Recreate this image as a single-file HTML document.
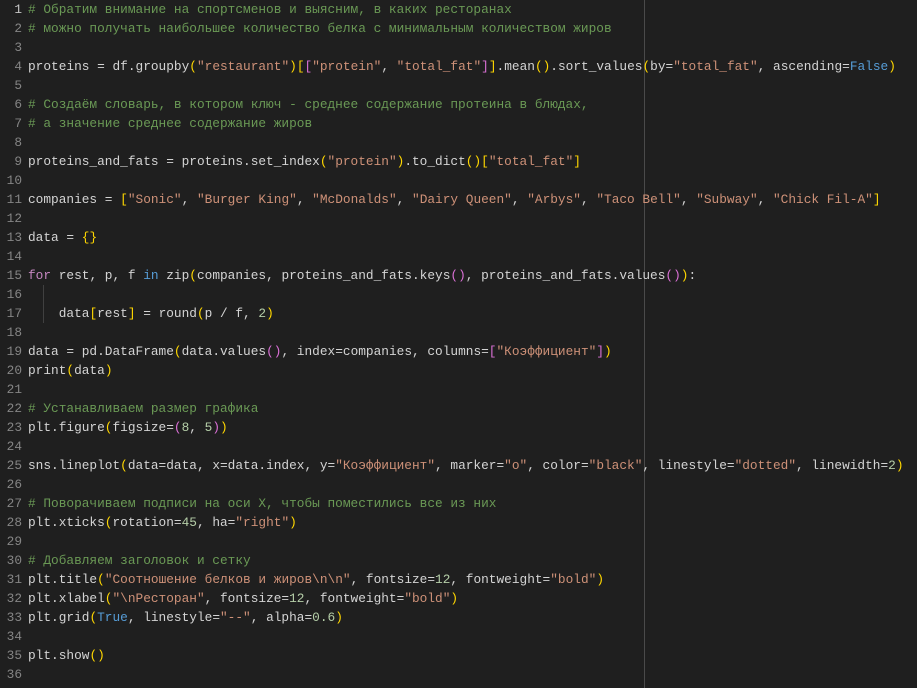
<!DOCTYPE html>
<html><head><meta charset="utf-8"><style>
html,body{margin:0;padding:0;background:#1f1f1f;width:917px;height:688px;overflow:hidden}
.ed{position:relative;font-family:"Liberation Mono","DejaVu Sans Mono",monospace;font-size:12.8px;color:#d4d4d4}
.l{position:absolute;left:0;height:19px;line-height:19px;white-space:pre}
.n{position:absolute;width:22px;text-align:right;color:#858585}
.c{position:absolute;left:28px}
.cm{color:#6a9955}.s{color:#ce9178}.k{color:#569cd6}.kf{color:#c586c0}.nu{color:#b5cea8}
.g{color:#ffd700}.p{color:#da70d6}.b{color:#179fff}
.ruler{position:absolute;left:644px;top:0;width:1px;height:688px;background:#4a4a4a}
.guide{position:absolute;left:43px;width:1px;background:#404040}
</style></head><body><div class="ed">
<div class="ruler"></div>
<div class="guide" style="top:285px;height:38px"></div>
<div class="l" style="top:0"><span class="n" style="color:#c6c6c6">1</span><span class="c"><span class="cm"># Обратим внимание на спортсменов и выясним, в каких ресторанах</span></span></div>
<div class="l" style="top:19px"><span class="n">2</span><span class="c"><span class="cm"># можно получать наибольшее количество белка с минимальным количеством жиров</span></span></div>
<div class="l" style="top:38px"><span class="n">3</span></div>
<div class="l" style="top:57px"><span class="n">4</span><span class="c">proteins = df.groupby<span class="g">(</span><span class="s">"restaurant"</span><span class="g">)</span><span class="g">[</span><span class="p">[</span><span class="s">"protein"</span>, <span class="s">"total_fat"</span><span class="p">]</span><span class="g">]</span>.mean<span class="g">()</span>.sort_values<span class="g">(</span>by=<span class="s">"total_fat"</span>, ascending=<span class="k">False</span><span class="g">)</span></span></div>
<div class="l" style="top:76px"><span class="n">5</span></div>
<div class="l" style="top:95px"><span class="n">6</span><span class="c"><span class="cm"># Создаём словарь, в котором ключ - среднее содержание протеина в блюдах,</span></span></div>
<div class="l" style="top:114px"><span class="n">7</span><span class="c"><span class="cm"># а значение среднее содержание жиров</span></span></div>
<div class="l" style="top:133px"><span class="n">8</span></div>
<div class="l" style="top:152px"><span class="n">9</span><span class="c">proteins_and_fats = proteins.set_index<span class="g">(</span><span class="s">"protein"</span><span class="g">)</span>.to_dict<span class="g">()</span><span class="g">[</span><span class="s">"total_fat"</span><span class="g">]</span></span></div>
<div class="l" style="top:171px"><span class="n">10</span></div>
<div class="l" style="top:190px"><span class="n">11</span><span class="c">companies = <span class="g">[</span><span class="s">"Sonic"</span>, <span class="s">"Burger King"</span>, <span class="s">"McDonalds"</span>, <span class="s">"Dairy Queen"</span>, <span class="s">"Arbys"</span>, <span class="s">"Taco Bell"</span>, <span class="s">"Subway"</span>, <span class="s">"Chick Fil-A"</span><span class="g">]</span></span></div>
<div class="l" style="top:209px"><span class="n">12</span></div>
<div class="l" style="top:228px"><span class="n">13</span><span class="c">data = <span class="g">{}</span></span></div>
<div class="l" style="top:247px"><span class="n">14</span></div>
<div class="l" style="top:266px"><span class="n">15</span><span class="c"><span class="kf">for</span> rest, p, f <span class="k">in</span> zip<span class="g">(</span>companies, proteins_and_fats.keys<span class="p">()</span>, proteins_and_fats.values<span class="p">()</span><span class="g">)</span>:</span></div>
<div class="l" style="top:285px"><span class="n">16</span></div>
<div class="l" style="top:304px"><span class="n">17</span><span class="c">    data<span class="g">[</span>rest<span class="g">]</span> = round<span class="g">(</span>p / f, <span class="nu">2</span><span class="g">)</span></span></div>
<div class="l" style="top:323px"><span class="n">18</span></div>
<div class="l" style="top:342px"><span class="n">19</span><span class="c">data = pd.DataFrame<span class="g">(</span>data.values<span class="p">()</span>, index=companies, columns=<span class="p">[</span><span class="s">"Коэффициент"</span><span class="p">]</span><span class="g">)</span></span></div>
<div class="l" style="top:361px"><span class="n">20</span><span class="c">print<span class="g">(</span>data<span class="g">)</span></span></div>
<div class="l" style="top:380px"><span class="n">21</span></div>
<div class="l" style="top:399px"><span class="n">22</span><span class="c"><span class="cm"># Устанавливаем размер графика</span></span></div>
<div class="l" style="top:418px"><span class="n">23</span><span class="c">plt.figure<span class="g">(</span>figsize=<span class="p">(</span><span class="nu">8</span>, <span class="nu">5</span><span class="p">)</span><span class="g">)</span></span></div>
<div class="l" style="top:437px"><span class="n">24</span></div>
<div class="l" style="top:456px"><span class="n">25</span><span class="c">sns.lineplot<span class="g">(</span>data=data, x=data.index, y=<span class="s">"Коэффициент"</span>, marker=<span class="s">"o"</span>, color=<span class="s">"black"</span>, linestyle=<span class="s">"dotted"</span>, linewidth=<span class="nu">2</span><span class="g">)</span></span></div>
<div class="l" style="top:475px"><span class="n">26</span></div>
<div class="l" style="top:494px"><span class="n">27</span><span class="c"><span class="cm"># Поворачиваем подписи на оси X, чтобы поместились все из них</span></span></div>
<div class="l" style="top:513px"><span class="n">28</span><span class="c">plt.xticks<span class="g">(</span>rotation=<span class="nu">45</span>, ha=<span class="s">"right"</span><span class="g">)</span></span></div>
<div class="l" style="top:532px"><span class="n">29</span></div>
<div class="l" style="top:551px"><span class="n">30</span><span class="c"><span class="cm"># Добавляем заголовок и сетку</span></span></div>
<div class="l" style="top:570px"><span class="n">31</span><span class="c">plt.title<span class="g">(</span><span class="s">"Соотношение белков и жиров\n\n"</span>, fontsize=<span class="nu">12</span>, fontweight=<span class="s">"bold"</span><span class="g">)</span></span></div>
<div class="l" style="top:589px"><span class="n">32</span><span class="c">plt.xlabel<span class="g">(</span><span class="s">"\nРесторан"</span>, fontsize=<span class="nu">12</span>, fontweight=<span class="s">"bold"</span><span class="g">)</span></span></div>
<div class="l" style="top:608px"><span class="n">33</span><span class="c">plt.grid<span class="g">(</span><span class="k">True</span>, linestyle=<span class="s">"--"</span>, alpha=<span class="nu">0.6</span><span class="g">)</span></span></div>
<div class="l" style="top:627px"><span class="n">34</span></div>
<div class="l" style="top:646px"><span class="n">35</span><span class="c">plt.show<span class="g">()</span></span></div>
<div class="l" style="top:665px"><span class="n">36</span></div>
</div></body></html>
